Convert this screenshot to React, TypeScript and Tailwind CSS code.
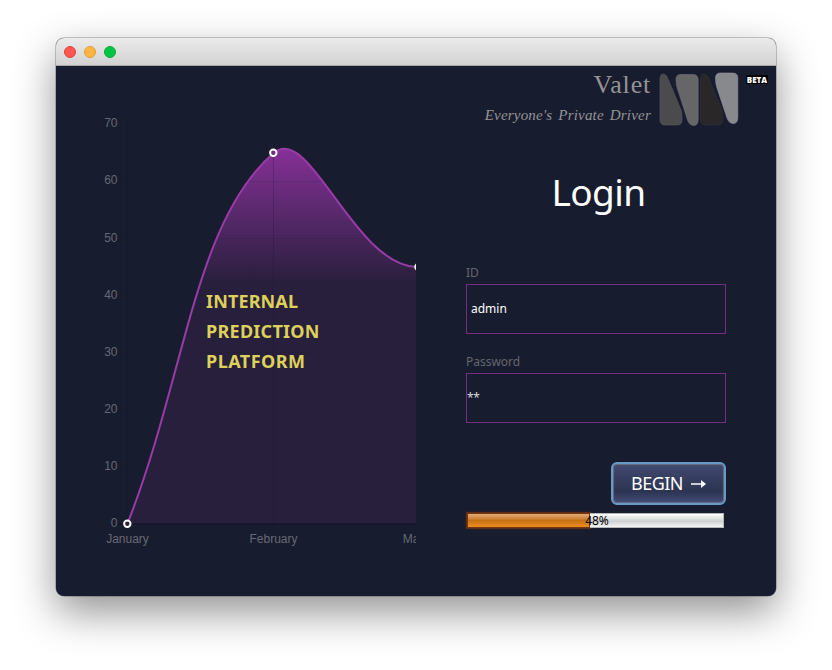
const yLabels = [70, 60, 50, 40, 30, 20, 10, 0];
const gridY = [57.5, 115.5, 172.5, 229.5, 286.5, 343.5, 400.5];

function Chart() {
  return (
    <svg width="360" height="530" viewBox="0 0 360 530" className="block font-['Liberation_Sans',Arial,sans-serif] text-[12px]">
      <defs>
        <linearGradient id="area" gradientUnits="userSpaceOnUse" x1="0" y1="82" x2="0" y2="217">
          <stop offset="0" stopColor="#863097" />
          <stop offset="0.5" stopColor="#58286b" />
          <stop offset="1" stopColor="#281f3c" />
        </linearGradient>
      </defs>
      <path
        d="M71.5 457.5C130 309 137.500 157 217.500 87C254 56 298 201 362 201V457.500Z"
        fill="url(#area)"
      />
      <g stroke="#10152a" strokeOpacity="0.25">
        {gridY.map((y) => (
          <path key={y} d={`M62 ${y}H360`} strokeOpacity="0.13" />
        ))}
        <path d="M71.500 57V466" strokeOpacity="0.5" />
        <path d="M217.500 57V466" />
        <path d="M62 458H360" stroke="#101426" strokeOpacity="1" />
      </g>
      <path
        d="M71.500 457.500C130 309 137.500 157 217.500 87C254 56 298 201 362 201"
        fill="none"
        stroke="#993ba6"
        strokeWidth="2"
      />
      <g fill="#30213c" stroke="#ffffff" strokeWidth="2">
        <circle cx="71.300" cy="457.800" r="3.200" />
        <circle cx="217.300" cy="86.800" r="3.200" fill="#732c83" />
        <circle cx="362.500" cy="201" r="3.200" />
      </g>
      <g fill="#666971" textAnchor="end">
        {yLabels.map((label, i) => (
          <text key={label} x="61.500" y={61.3 + i * 57.150}>
            {label}
          </text>
        ))}
      </g>
      <g fill="#666971" textAnchor="middle">
        <text x="71.500" y="477">January</text>
        <text x="217.500" y="477">February</text>
        <text x="363.500" y="477">March</text>
      </g>
      <g fill="#ddd05b" className="font-['Noto_Sans',sans-serif] text-[18px] font-bold">
        <text x="150" y="242" textLength="92">INTERNAL</text>
        <text x="150" y="272" textLength="113.500">PREDICTION</text>
        <text x="150" y="302" textLength="99">PLATFORM</text>
      </g>
    </svg>
  );
}

function Logo() {
  return (
    <svg width="80" height="54" viewBox="0 0 80 54" className="mt-1.5 ml-2 shrink-0" strokeWidth="0.6">
      <path d="M1 7Q1 2 4.500 2Q7.500 2 9.500 8L22 38Q23 41 23 44V48Q23 53 18 53H6Q1 53 1 48Z" fill="#4b4b4d" stroke="#5c5c61" />
      <path d="M17 8Q16.500 2.500 22 2.500H34Q39.200 2.500 39.200 8V47Q39.200 53.500 35 53.500Q30.500 53.500 28.500 48L18.500 17Q17 13 17 8Z" fill="#666669" stroke="#707075" />
      <path d="M41.500 7Q41.500 2 45 2Q48.500 2 50.500 8L63 38Q63.800 41 63.800 44V48Q63.800 53 58.500 53H46.500Q41.500 53 41.500 48Z" fill="#292728" stroke="#343338" />
      <path d="M56.500 6Q56.500 1 61.500 1H73.500Q78.800 1 78.800 6V45Q78.800 51.500 74.500 51.500Q70 51.500 68 46L58 16Q56.500 12 56.500 6Z" fill="#88898d" stroke="#9293a0" />
    </svg>
  );
}

function Field({ label, value, secret = false }: { label: string; value: string; secret?: boolean }) {
  return (
    <div>
      <div className="h-5 pt-px text-[12px] leading-4 tracking-[-0.02px] text-[#66676b]">{label}</div>
      <div
        className={`flex h-[50px] items-center border border-[#742d84] text-[12px] ${
          secret ? "pl-0 tracking-[-0.4px] text-[#d8d9dd]" : "pl-1 text-white"
        }`}
      >
        {value}
      </div>
    </div>
  );
}

export default function App() {
  return (
    <div className="h-[670px] w-[832px] overflow-hidden bg-white px-14 pt-[38px]">
      <div className="h-[558px] w-[720px] overflow-hidden rounded-lg bg-[#181c2f] shadow-[0_0_0_0.5px_rgba(0,0,0,0.4),0_16px_42px_rgba(0,0,0,0.43)]">
        <div className="flex h-7 items-center gap-2 border-b border-[#a9a9a9] bg-linear-to-b from-[#ebebeb] to-[#d2d2d2] pl-2">
          <div className="size-3 rounded-full border border-[#e2433f] bg-[#ff5653]" />
          <div className="size-3 rounded-full border border-[#dea036] bg-[#ffb541]" />
          <div className="size-3 rounded-full border border-[#0aaa36] bg-[#00c543]" />
        </div>
        <div className="flex h-[530px]">
          <div className="w-[360px] overflow-hidden">
            <Chart />
          </div>
          <div className="w-[360px] font-['Noto_Sans','Open_Sans',sans-serif]">
            <div className="flex h-[66px] pl-[69px]">
              <div className="w-[166px] shrink-0 text-right font-['Liberation_Serif',serif] whitespace-nowrap text-[#949494]">
                <div className="mt-[3px] h-8 text-[26px] leading-8 tracking-[0.8px]">Valet</div>
                <div className="flex justify-end text-[15px] leading-7 tracking-[0.2px] [word-spacing:2px] italic">Everyone's Private Driver</div>
              </div>
              <Logo />
              <div className="mt-[9px] ml-[7px] h-[9px] w-[22px] bg-black text-center font-['Open_Sans',sans-serif] text-[8px] leading-[9px] font-extrabold text-white">BETA</div>
            </div>
            <div className="ml-[50px] w-[260px]">
              <div className="pt-8 pl-[5px] text-center text-[37px] leading-[55px] tracking-[-0.6px] text-white">Login</div>
              <div className="mt-[45px] flex flex-col gap-[19px]">
                <Field label="ID" value="admin" />
                <Field label="Password" value="**" secret />
              </div>
              <div className="mt-[39px] flex justify-end">
                <div className="flex h-[43px] w-[115px] items-center justify-center gap-2 rounded-md border-2 border-[#6799c8] bg-linear-to-b from-[#414a70] via-[#2c3452] via-70% to-[#424b77] text-[18px] text-white shadow-[inset_0_0_1px_1px_rgba(125,128,135,0.7)]">
                  <span className="tracking-[-0.5px]">BEGIN</span>
                  <svg width="15" height="10" viewBox="0 0 15 10" fill="none" stroke="#fff" strokeWidth="1.500">
                    <path d="M0 5H11" />
                    <path d="M10 1L15 5L10 9Z" fill="#fff" stroke="none" />
                  </svg>
                </div>
              </div>
              <div className="relative mt-2 ml-px flex h-[15px] w-[257px]">
                <div className="w-[123px] border border-[#783408] bg-linear-to-b from-[#dfad74] via-[#c77112] via-50% to-[#ed8d23] shadow-[0_0_1px_1px_#5a2d19]" />
                <div className="relative h-[15px] flex-1 border border-l-0 border-[#b5b7bd] bg-linear-to-b from-white via-[#cfd0d2] via-55% to-[#f5f5f5]" />
                <div className="absolute inset-0 pl-[3px] text-center text-[12px] leading-[15px] text-black">48%</div>
              </div>
            </div>
          </div>
        </div>
      </div>
    </div>
  );
}
